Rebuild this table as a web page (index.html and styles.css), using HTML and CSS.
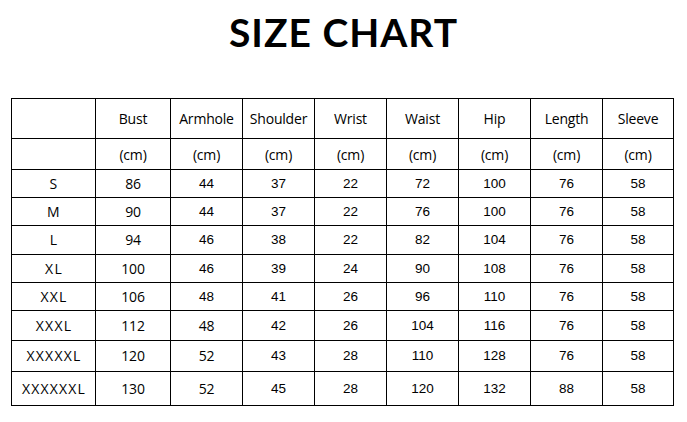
FILE: index.html
```html
<!DOCTYPE html>
<html>
<head>
<meta charset="utf-8">
<link rel="stylesheet" href="styles.css">
</head>
<body>
<h1 class="title">SIZE CHART</h1>
<table class="chart">
  <colgroup>
    <col class="c-size"><col class="c-bust"><col class="c-arm"><col class="c-sh"><col class="c-wr"><col class="c-wa"><col class="c-hip"><col class="c-len"><col class="c-sl">
  </colgroup>
  <tr class="r-head">
    <td></td><td>Bust</td><td>Armhole</td><td>Shoulder</td><td>Wrist</td><td>Waist</td><td>Hip</td><td>Length</td><td>Sleeve</td>
  </tr>
  <tr class="r-unit">
    <td></td><td>(cm)</td><td>(cm)</td><td>(cm)</td><td>(cm)</td><td>(cm)</td><td>(cm)</td><td>(cm)</td><td>(cm)</td>
  </tr>
  <tr class="r-a"><td class="sz">S</td><td class="rn">86</td><td>44</td><td>37</td><td>22</td><td>72</td><td>100</td><td>76</td><td>58</td></tr>
  <tr class="r-a"><td class="sz">M</td><td class="rn">90</td><td>44</td><td>37</td><td>22</td><td>76</td><td>100</td><td>76</td><td>58</td></tr>
  <tr class="r-a"><td class="sz">L</td><td class="rn">94</td><td>46</td><td>38</td><td>22</td><td>82</td><td>104</td><td>76</td><td>58</td></tr>
  <tr class="r-a"><td class="sz">XL</td><td class="rn">100</td><td>46</td><td>39</td><td>24</td><td>90</td><td>108</td><td>76</td><td>58</td></tr>
  <tr class="r-a"><td class="sz">XXL</td><td class="rn">106</td><td>48</td><td>41</td><td>26</td><td>96</td><td>110</td><td>76</td><td>58</td></tr>
  <tr class="r-b"><td class="sz">XXXL</td><td class="rn">112</td><td class="rn">48</td><td>42</td><td>26</td><td>104</td><td>116</td><td>76</td><td>58</td></tr>
  <tr class="r-c"><td class="sz">XXXXXL</td><td class="rn">120</td><td class="rn">52</td><td>43</td><td>28</td><td>110</td><td>128</td><td>76</td><td>58</td></tr>
  <tr class="r-d"><td class="sz">XXXXXXL</td><td class="rn">130</td><td class="rn">52</td><td>45</td><td>28</td><td>120</td><td>132</td><td>88</td><td>58</td></tr>
</table>
</body>
</html>
```
FILE: styles.css
```css
html, body {
  margin: 0;
  padding: 0;
  background: #fff;
}
body {
  font-family: "Liberation Sans", Arial, sans-serif;
  color: #000;
}
.title {
  margin: 0;
  padding-top: 10px;
  height: 98px;
  box-sizing: border-box;
  text-align: center;
  font-family: "Lato", sans-serif;
  font-weight: 700;
  font-size: 39px;
  line-height: 44px;
  letter-spacing: 1px;
}
.chart {
  margin-left: 11px;
  border-collapse: collapse;
  table-layout: fixed;
  width: 663px;
  font-size: 13.5px;
}
.chart td {
  border: 1px solid #000;
  text-align: center;
  vertical-align: middle;
  padding: 0;
  white-space: nowrap;
}
.c-size { width: 84px; }
.c-bust { width: 75px; }
.c-arm { width: 72px; }
.c-sh { width: 72px; }
.c-wr { width: 72px; }
.c-wa { width: 72px; }
.c-hip { width: 72px; }
.c-len { width: 72px; }
.c-sl { width: 71px; }
.r-head td, .r-unit td, .sz, .rn {
  font-family: "Open Sans", "Lato", sans-serif;
  font-size: 14px;
  letter-spacing: -0.2px;
}
.chart .sz {
  letter-spacing: 1.2px;
  text-indent: 1px;
}
.r-head td { height: 39px; }
.r-unit td { height: 30px; }
.r-a td { height: 27.2px; }
.r-b td { height: 29px; }
.r-c td { height: 30px; }
.r-d td { height: 33px; }
```
